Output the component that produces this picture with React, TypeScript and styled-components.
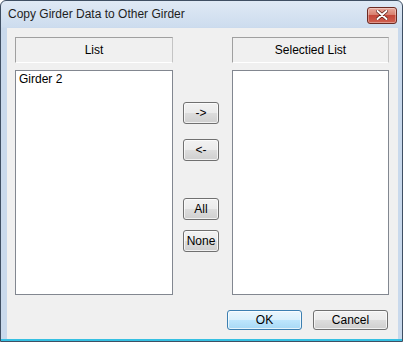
import React, { useState } from 'react';
import styled, { createGlobalStyle, css } from 'styled-components';

const GlobalStyle = createGlobalStyle`
  html, body {
    margin: 0;
    padding: 0;
    background: #ffffff;
  }
  * {
    box-sizing: border-box;
  }
`;

const Window = styled.div`
  width: 403px;
  height: 342px;
  display: flex;
  flex-direction: column;
  border: 1px solid #3f4f63;
  border-radius: 6px 6px 0 0;
  padding: 0 4px 2px 6px;
  background: linear-gradient(
    to bottom,
    #dfe9f5 0,
    #cddcee 26px,
    #c9d9ec 27px,
    #c9d9ec calc(100% - 2px),
    #35c0e2 calc(100% - 2px)
  );
  font-family: 'Liberation Sans', Arial, sans-serif;
  font-size: 12px;
  color: #000;
`;

const TitleBar = styled.div`
  height: 27px;
  flex: none;
  display: flex;
  align-items: center;
  justify-content: space-between;
  padding: 0 1px 1px 1px;
`;

const Title = styled.span`
  font-size: 12px;
  color: #1e1e1e;
`;

const CloseButton = styled.button`
  width: 30px;
  height: 17px;
  margin-top: 2px;
  padding: 0;
  display: flex;
  align-items: center;
  justify-content: center;
  border: 1px solid #6c2a22;
  border-radius: 3px;
  background: linear-gradient(
    to bottom,
    #e9a99c 0,
    #d8806f 45%,
    #c4473a 50%,
    #d0604f 100%
  );
  box-shadow: inset 0 0 0 1px rgba(255, 255, 255, 0.35);
  cursor: pointer;
`;

const Client = styled.div`
  flex: 1;
  display: flex;
  flex-direction: column;
  background: #f0f0f0;
  padding: 9px 9px 9px 8px;
`;

const Main = styled.div`
  display: flex;
  align-items: flex-start;
`;

const Column = styled.div<{ $width: number }>`
  width: ${(p) => p.$width}px;
  display: flex;
  flex-direction: column;
  gap: 7px;
`;

const Header = styled.div`
  height: 26px;
  display: flex;
  align-items: center;
  justify-content: center;
  border-top: 1px solid #a0a0a0;
  border-left: 1px solid #a0a0a0;
  border-right: 1px solid #c4c4c4;
  border-bottom: 1px solid #ffffff;
  padding-bottom: 1px;
`;

const ListBox = styled.div`
  height: 225px;
  background: #ffffff;
  border: 1px solid #828790;
  padding: 1px 3px;
  overflow: hidden;
`;

const ListItem = styled.div<{ $selected?: boolean }>`
  line-height: 14px;
  cursor: default;
  ${(p) =>
    p.$selected &&
    css`
      background: #3399ff;
      color: #fff;
    `}
`;

const Middle = styled.div`
  width: 36px;
  margin: 0 13px 0 10px;
  display: flex;
  flex-direction: column;
  padding-top: 65px;
`;

const Btn = styled.button<{ $primary?: boolean; $gap?: number }>`
  height: 22px;
  margin-top: ${(p) => p.$gap ?? 0}px;
  padding: 0;
  font-family: 'Liberation Sans', Arial, sans-serif;
  font-size: 12px;
  color: #000;
  border: 1px solid #707070;
  border-radius: 3px;
  background: linear-gradient(
    to bottom,
    #f2f2f2 0,
    #ebebeb 50%,
    #dddddd 50%,
    #cfcfcf 100%
  );
  box-shadow: inset 0 0 0 1px rgba(255, 255, 255, 0.7);
  cursor: pointer;

  ${(p) =>
    p.$primary &&
    css`
      border-color: #3c7fb1;
      background: linear-gradient(
        to bottom,
        #eaf6fd 0,
        #d9f0fc 50%,
        #bee6fd 50%,
        #a7d9f5 100%
      );
    `}
`;

const Footer = styled.div`
  margin-top: auto;
  display: flex;
  justify-content: flex-end;
  gap: 11px;
  padding-right: 1px;
`;

const DialogButton = styled(Btn)`
  width: 75px;
  height: 20px;
`;

const App: React.FC = () => {
  const [available, setAvailable] = useState<string[]>(['Girder 2']);
  const [selected, setSelected] = useState<string[]>([]);
  const [picked, setPicked] = useState<string | null>(null);

  const moveRight = () => {
    if (picked && available.includes(picked)) {
      setAvailable(available.filter((g) => g !== picked));
      setSelected([...selected, picked]);
      setPicked(null);
    }
  };

  const moveLeft = () => {
    if (picked && selected.includes(picked)) {
      setSelected(selected.filter((g) => g !== picked));
      setAvailable([...available, picked]);
      setPicked(null);
    }
  };

  const moveAll = () => {
    setSelected([...selected, ...available]);
    setAvailable([]);
  };

  const moveNone = () => {
    setAvailable([...available, ...selected]);
    setSelected([]);
  };

  return (
    <>
      <GlobalStyle />
      <Window>
        <TitleBar>
          <Title>Copy Girder Data to Other Girder</Title>
          <CloseButton aria-label="Close">
            <svg width="12" height="10" viewBox="0 0 12 10">
              <path
                d="M1.5 1 L10.5 9 M10.5 1 L1.5 9"
                stroke="#5a1a12"
                strokeWidth="3.4"
                strokeLinecap="round"
              />
              <path
                d="M1.5 1 L10.5 9 M10.5 1 L1.5 9"
                stroke="#ffffff"
                strokeWidth="2"
                strokeLinecap="round"
              />
            </svg>
          </CloseButton>
        </TitleBar>
        <Client>
          <Main>
            <Column $width={158}>
              <Header>List</Header>
              <ListBox>
                {available.map((g) => (
                  <ListItem key={g} $selected={picked === g} onClick={() => setPicked(g)}>
                    {g}
                  </ListItem>
                ))}
              </ListBox>
            </Column>
            <Middle>
              <Btn onClick={moveRight}>-&gt;</Btn>
              <Btn $gap={15} onClick={moveLeft}>&lt;-</Btn>
              <Btn $gap={37} onClick={moveAll}>All</Btn>
              <Btn $gap={10} onClick={moveNone}>None</Btn>
            </Middle>
            <Column $width={157}>
              <Header>Selectied List</Header>
              <ListBox>
                {selected.map((g) => (
                  <ListItem key={g} $selected={picked === g} onClick={() => setPicked(g)}>
                    {g}
                  </ListItem>
                ))}
              </ListBox>
            </Column>
          </Main>
          <Footer>
            <DialogButton $primary>OK</DialogButton>
            <DialogButton>Cancel</DialogButton>
          </Footer>
        </Client>
      </Window>
    </>
  );
};

export default App;
